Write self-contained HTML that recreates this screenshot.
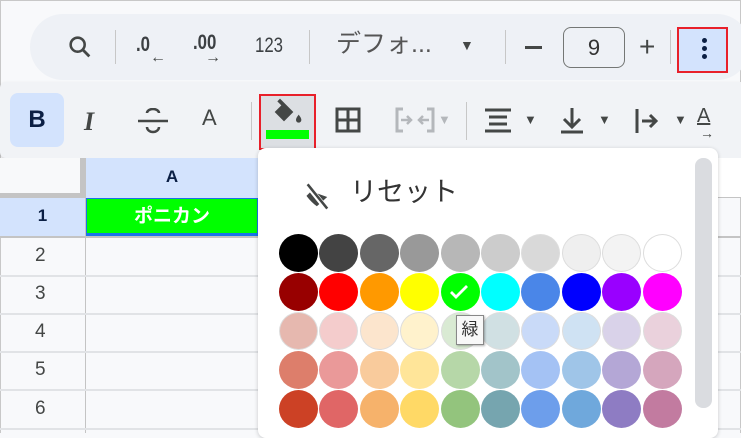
<!DOCTYPE html><html><head><meta charset="utf-8"><style>
*{box-sizing:border-box;margin:0;padding:0}
body{width:741px;height:433px;overflow:hidden;background:#f8f9fb;font-family:"Liberation Sans","Noto Sans CJK JP",sans-serif;position:relative;color:#444746}
.a{position:absolute}
.sep{position:absolute;width:1px;background:#c7c7c7}
.t{position:absolute;font-size:20px;color:#444746;line-height:1}
.c{position:absolute;width:39px;height:38px;border-radius:50%}
.gl{position:absolute;background:#e1e3e6}
.n{transform:scaleX(.8);transform-origin:left top;font-weight:bold;color:#3c4043}
</style></head><body>
<div class="a" style="left:0;top:0;width:741px;height:433px;border:1px solid #c8c8c8;border-bottom:none"></div>
<!-- toolbar 1 -->
<div class="a" style="left:30px;top:14px;width:720px;height:66px;background:#eef1f6;border-radius:33px"></div>
<svg class="a" style="left:66px;top:33px" width="28" height="28" viewBox="0 0 24 24"><circle cx="10" cy="10" r="6" fill="none" stroke="#444746" stroke-width="2.2"/><path d="M14.5 14.5L20 20" stroke="#444746" stroke-width="2.4"/></svg>
<div class="sep" style="left:115px;top:30px;height:34px"></div>
<div class="t n" style="left:136px;top:34px;font-size:21px">.0</div>
<div class="t" style="left:150px;top:50px;font-size:16px;font-weight:bold">←</div>
<div class="t n" style="left:193px;top:32px;font-size:21px">.00</div>
<div class="t" style="left:205px;top:50px;font-size:16px;font-weight:bold">→</div>
<div class="t n" style="left:255px;top:35px;font-size:21px;font-weight:normal">123</div>
<div class="sep" style="left:309px;top:30px;height:34px"></div>
<div class="t" style="left:336px;top:32px;font-size:25px;color:#555">デフォ...</div>
<div class="t" style="left:460px;top:38px;font-size:14px">▼</div>
<div class="sep" style="left:505px;top:30px;height:34px"></div>
<div class="a" style="left:525px;top:46px;width:17px;height:2.5px;background:#444746"></div>
<div class="a" style="left:563px;top:27px;width:62px;height:41px;border:1px solid #747775;border-radius:8px;font-size:22px;text-align:center;line-height:39px;color:#333">9</div>
<div class="t" style="left:639px;top:33px;font-size:28px">+</div>
<div class="sep" style="left:670px;top:30px;height:34px"></div>
<div class="a" style="left:677px;top:27px;width:51px;height:46px;background:#d3e3fd;border:2.5px solid #e8202a"></div>
<div class="a" style="left:702px;top:38px;width:5px;height:5px;border-radius:50%;background:#0b1f44;box-shadow:0 8px 0 #0b1f44,0 16px 0 #0b1f44"></div>
<!-- toolbar 2 -->
<div class="a" style="left:0;top:82px;width:741px;height:76px;background:#f1f3f6;box-shadow:0 2px 4px rgba(0,0,0,.15);border-radius:6px 0 0 6px"></div>
<div class="a" style="left:10px;top:93px;width:54px;height:54px;background:#d3e3fd;border-radius:8px;font-weight:bold;font-size:24px;color:#0b1f44;text-align:center;line-height:54px">B</div>
<div class="t" style="left:84px;top:109px;font-size:26px;font-style:italic;font-weight:bold;font-family:'Liberation Serif',serif">I</div>
<svg class="a" style="left:138px;top:108px" width="30" height="26" viewBox="0 0 30 26"><path d="M0 13h30" stroke="#444746" stroke-width="2.5"/><path d="M9 5a6 4 0 0 1 12 0M9 19a6 5 0 0 0 12 0" fill="none" stroke="#444746" stroke-width="2.5"/></svg>
<div class="t" style="left:202px;top:107px;font-size:22px">A</div>
<div class="sep" style="left:251px;top:102px;height:38px"></div>
<div class="a" style="left:259px;top:94px;width:57px;height:56px;background:#dcdfe3;border:2.5px solid #e8202a"></div>
<svg class="a" style="left:272px;top:97px" width="32" height="30" viewBox="0 0 24 22"><path d="M6 1L4 3l3 3-5 5 7 7 7-7z" fill="#444746"/><path d="M5 10h11" stroke="#dcdfe3" stroke-width="0"/><path d="M7 6L3 10" stroke="#dcdfe3" stroke-width="0"/><path d="M20 13c1.5 2 2 3 2 4a2 2 0 0 1-4 0c0-1 .5-2 2-4z" fill="#444746"/></svg>
<div class="a" style="left:266px;top:130px;width:43px;height:9px;background:#00ff00"></div>
<svg class="a" style="left:335px;top:107px" width="26" height="26" viewBox="0 0 26 26"><rect x="2" y="2" width="22" height="22" fill="none" stroke="#444746" stroke-width="3"/><path d="M13 2v22M2 13h22" stroke="#444746" stroke-width="3"/></svg>
<svg class="a" style="left:395px;top:107px" width="40" height="26" viewBox="0 0 40 26"><path d="M8 2H2v22h6M32 2h6v22h-6" fill="none" stroke="#b4b7bb" stroke-width="3"/><path d="M6 13h9M12 9l4 4-4 4M34 13h-9M28 9l-4 4 4 4" fill="none" stroke="#b4b7bb" stroke-width="2.5"/></svg>
<div class="t" style="left:438px;top:113px;font-size:13px;color:#b4b7bb">▼</div>
<div class="sep" style="left:466px;top:102px;height:38px"></div>
<svg class="a" style="left:484px;top:108px" width="28" height="26" viewBox="0 0 28 26"><path d="M1 2h26M5 9h18M5 16h18M1 23h26" stroke="#444746" stroke-width="3"/></svg>
<div class="t" style="left:524px;top:113px;font-size:13px">▼</div>
<svg class="a" style="left:560px;top:106px" width="24" height="28" viewBox="0 0 24 28"><path d="M12 2v18M4 13l8 8 8-8M1 26h22" fill="none" stroke="#444746" stroke-width="3"/></svg>
<div class="t" style="left:598px;top:113px;font-size:13px">▼</div>
<svg class="a" style="left:634px;top:108px" width="28" height="26" viewBox="0 0 28 26"><path d="M3 1v24M8 13h13M16 7l6 6-6 6" fill="none" stroke="#444746" stroke-width="3"/></svg>
<div class="t" style="left:674px;top:113px;font-size:13px">▼</div>
<div class="t" style="left:697px;top:106px;font-size:20px;text-decoration:underline">A</div>
<div class="t" style="left:700px;top:126px;font-size:14px">→</div>
<!-- grid -->
<div class="a" style="left:0;top:158px;width:85px;height:40px;background:#f8f9fa;border-right:5px solid #c4c4c4;border-bottom:5px solid #c4c4c4"></div>
<div class="a" style="left:86px;top:158px;width:655px;height:40px;background:#fff;border-bottom:1px solid #c4c4c4"></div>
<div class="a" style="left:86px;top:158px;width:172px;height:40px;background:#d3e3fd;text-align:center;line-height:38px;font-weight:bold;font-size:17px;color:#0b1f44">A</div>
<div class="a" style="left:0;top:198px;width:85px;height:38px;background:#d3e3fd;text-align:center;line-height:36px;font-weight:bold;font-size:17px;color:#0b1f44">1</div>
<div class="a" style="left:86px;top:198px;width:172px;height:38px;background:#00ff00;border:1px solid #1a73e8;border-bottom:3px solid #1a73e8;text-align:center;line-height:36px;font-weight:bold;font-size:19px;color:#fff">ポニカン</div>
<div class="a" style="left:85px;top:158px;width:1px;height:275px;background:#c4c4c4"></div>
<div class="gl" style="left:0;top:236px;width:741px;height:2px;background:#c4c4c4"></div>
<div class="gl" style="left:0;top:275px;width:741px;height:2px"></div>
<div class="gl" style="left:0;top:313px;width:741px;height:2px"></div>
<div class="gl" style="left:0;top:351px;width:741px;height:2px"></div>
<div class="gl" style="left:0;top:389px;width:741px;height:2px"></div>
<div class="gl" style="left:0;top:428px;width:741px;height:2px"></div>
<div class="t" style="left:35px;top:246px;font-size:19px">2</div>
<div class="t" style="left:35px;top:284px;font-size:19px">3</div>
<div class="t" style="left:35px;top:322px;font-size:19px">4</div>
<div class="t" style="left:35px;top:360px;font-size:19px">5</div>
<div class="t" style="left:35px;top:399px;font-size:19px">6</div>
<!-- popup -->
<div class="a" style="left:258px;top:148px;width:460px;height:290px;background:#fff;border-radius:8px;box-shadow:0 1px 4px rgba(0,0,0,.2)"></div>
<div class="a" style="left:695px;top:158px;width:17px;height:250px;background:#dadce0;border-radius:8px"></div>
<svg class="a" style="left:304px;top:182px" width="28" height="30" viewBox="0 0 24 26"><path d="M6 8l-4 4c3 4 6 7 9 9l9-8z" fill="#444746"/><path d="M3 3l17 21" stroke="#fff" stroke-width="4.5"/><path d="M3 2l17 21" stroke="#444746" stroke-width="2.2"/></svg>
<div class="t" style="left:350px;top:179px;font-size:27px;color:#333">リセット</div>
<div id="cs"></div>
<div class="a" style="left:456px;top:315px;width:28px;height:30px;background:#f8f8f8;border:1px solid #888;box-shadow:1px 1px 2px rgba(0,0,0,.3);font-size:17px;text-align:center;line-height:28px;color:#333;z-index:3">緑</div>
<script>
var rows=[["#000","#434343","#666","#999","#b7b7b7","#ccc","#d9d9d9","#efefef","#f3f3f3","#fff"],
["#980000","#f00","#f90","#ff0","#0f0","#0ff","#4a86e8","#00f","#90f","#f0f"],
["#e6b8af","#f4cccc","#fce5cd","#fff2cc","#d9ead3","#d0e0e3","#c9daf8","#cfe2f3","#d9d2e9","#ead1dc"],
["#dd7e6b","#ea9999","#f9cb9c","#ffe599","#b6d7a8","#a2c4c9","#a4c2f4","#9fc5e8","#b4a7d6","#d5a6bd"],
["#cc4125","#e06666","#f6b26b","#ffd966","#93c47d","#76a5af","#6d9eeb","#6fa8dc","#8e7cc3","#c27ba0"]];
var h="";rows.forEach(function(r,i){r.forEach(function(c,j){var x=279+j*40.4,y=234+i*39;
var b=(i==0&&j>=6)||(i==2)?"border:1px solid #ddd;":"";
h+='<div class="c" style="left:'+x+'px;top:'+y+'px;background:'+c+';'+b+'"></div>';});});
h+='<svg class="a" style="left:447px;top:280px" width="24" height="24" viewBox="0 0 24 24"><path d="M4 12l5 5 11-11" fill="none" stroke="#fff" stroke-width="2.8"/></svg>';
document.getElementById("cs").innerHTML=h;
</script>
</body></html>
